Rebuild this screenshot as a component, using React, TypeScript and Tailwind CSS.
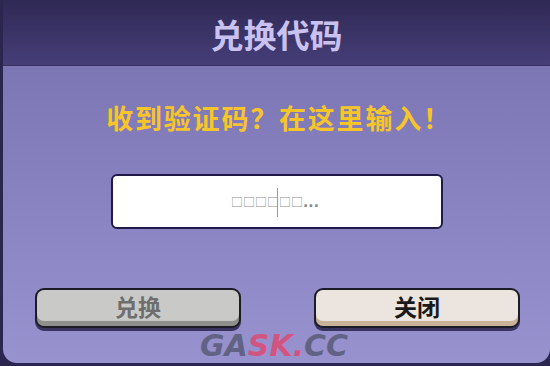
export default function App() {
  return (
    <div className="w-[550px] h-[366px] bg-[#2b2650] overflow-hidden" style={{ fontFamily: '"Noto Sans CJK SC", "Noto Sans", sans-serif' }}>
      <div className="relative ml-[3px] h-[363px] flex flex-col rounded-b-[14px] overflow-hidden">
        <div className="h-[66px] flex items-center justify-center bg-gradient-to-b from-[#2f2955] to-[#463e78] border-b border-[#3a335f]">
          <h1 className="text-[33px] font-bold text-[#c9c1ef] mt-[4px]">兑换代码</h1>
        </div>
        <div className="flex-1 flex flex-col items-center bg-gradient-to-b from-[#7c76b5] to-[#9892cf]">
          <p className="mt-[32px] ml-[5px] text-[27px] leading-[40px] font-bold text-[#f7c52a] tracking-[1.8px]">收到验证码？在这里输入！</p>
          <div className="relative mt-[36px] ml-[1px] w-[332px] h-[55px] bg-white border-2 border-[#1f1a48] rounded-[6px] flex items-center justify-center">
            <span className="text-[#8a8a8a] text-[12px] mt-[2px] ml-[-4px]">
              <span style={{ fontFamily: '"Noto Sans CJK SC", sans-serif' }}>□□□□□□</span>
              <span className="text-[14px] font-bold" style={{ fontFamily: '"DejaVu Sans", sans-serif' }}>...</span>
            </span>
            <span className="absolute left-[164px] top-[12px] w-px h-[29px] bg-[#9a9a9a]" />
          </div>
          <div className="mt-[59px] w-full flex justify-between pl-[32px] pr-[30px]">
            <button className="w-[206px] h-[40px] rounded-[9px] border-2 border-[#1d1b25] bg-[#c9c9c7] shadow-[inset_0_-5px_0_#8f8f8b,0_3px_0_#3a3560] flex items-center justify-center">
              <span className="text-[23px] font-bold text-[#6e6e6e] -mt-[3px]">兑换</span>
            </button>
            <button className="w-[206px] h-[40px] rounded-[9px] border-2 border-[#1d1b25] bg-[#ece5df] shadow-[inset_0_-5px_0_#c8b298,0_3px_0_#3a3560] flex items-center justify-center">
              <span className="text-[23px] font-bold text-[#1a1a1a] -mt-[3px]">关闭</span>
            </button>
          </div>
        </div>
        <div className="absolute left-[197px] top-[331px] text-[30px] font-black italic leading-none tracking-[0px] opacity-80" style={{ fontFamily: '"DejaVu Sans", sans-serif' }}>
          <span className="text-[#565872]">GA</span>
          <span className="text-[#e2466e]">SK.</span>
          <span className="text-[#565872]">CC</span>
        </div>
      </div>
    </div>
  );
}
